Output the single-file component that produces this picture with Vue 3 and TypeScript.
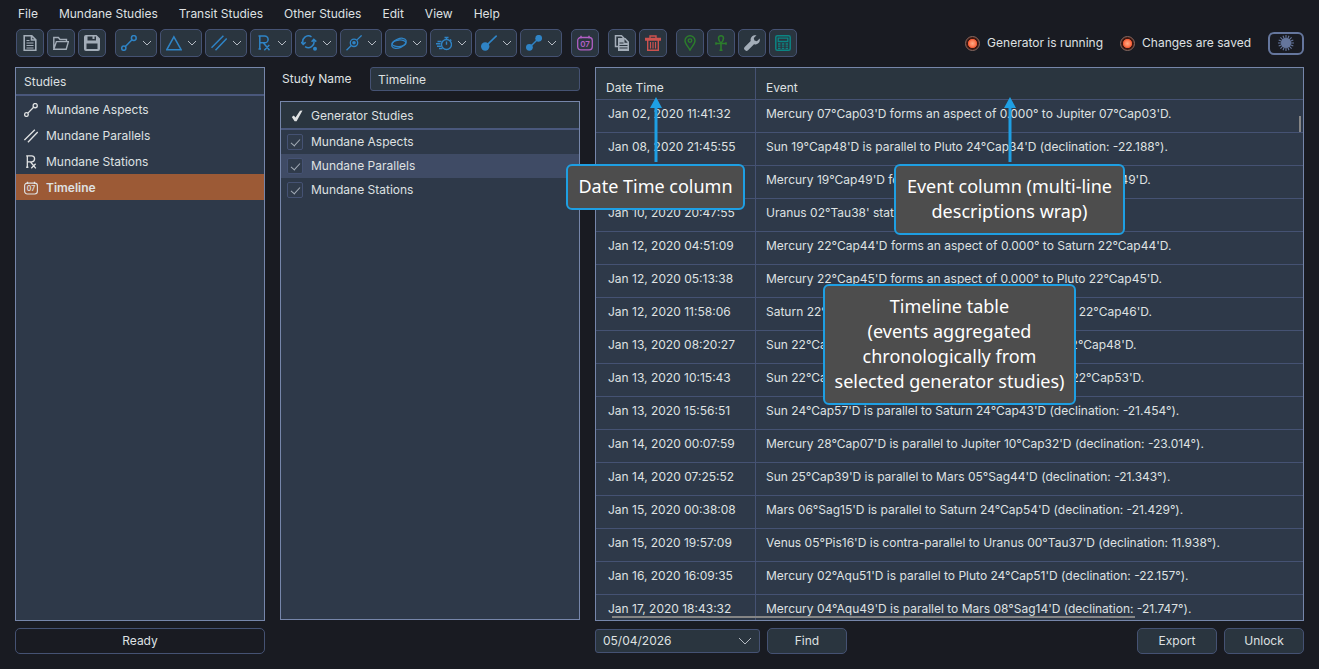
<script setup lang="ts">
import { ref } from 'vue'

interface Tool { name: string; icon: string; color: string; menu?: boolean }
interface EventRow { time: string; text: string }

const menus = ['File', 'Mundane Studies', 'Transit Studies', 'Other Studies', 'Edit', 'View', 'Help']

const stroke = 'fill="none" stroke="currentColor"'
const icons: Record<string, string> = {
  file: `<path ${stroke} stroke-width="1.6" d="M2.2.8h7.6l4 4v10.4H2.2zM9.5 1v4h4"/><path ${stroke} d="M4.5 5.5h3M4.5 8h7M4.5 10.5h7M4.5 13h7"/>`,
  open: `<path ${stroke} stroke-width="1.4" d="M.8 13.5V2.5h4.6l1.6 2h6.5v2M.8 14.2 3.4 6.6h12l-2.2 7.6z"/>`,
  save: `<path fill="currentColor" fill-rule="evenodd" d="M2 0h10.5L16 3.5V14a2 2 0 0 1-2 2H2a2 2 0 0 1-2-2V2a2 2 0 0 1 2-2zM3.5 1.5v4H12v-4h-1.500v2.500h-2v-2.500zM2.500 8.500v5.500h11v-5.500z"/>`,
  aspect: `<g ${stroke} stroke-width="1.5"><circle cx="2.800" cy="13.200" r="2.100"/><circle cx="12.800" cy="3" r="2.400"/><path d="m4.400 11.600 6.600-6.800"/></g>`,
  triangle: `<path ${stroke} stroke-width="1.500" d="M7.900 1.800 15.200 14.800H.7z"/>`,
  parallel: `<path ${stroke} stroke-width="1.500" d="M.5 12.700 12.400.8M4.500 15.200 15.700 3.500"/>`,
  rx: `<path ${stroke} stroke-width="1.500" d="M2.500 14H5M3.800 14V1M2.500 1h6.200a3.400 3.400 0 0 1 0 6.800H4M7.500 8l6 7.200M8.300 15.200l5-5.200"/>`,
  cycle: `<g ${stroke} stroke-width="1.500"><path d="M2.200 8.500A5.600 5.600 0 0 1 10.500 1.800M12.800 5.600a5.600 5.600 0 0 1-8.700 6"/><path d="M0 7l2.200 2.400L4.700 7.300M10.600 6.800l2.200-2.400 2.500 2.200"/></g><circle fill="currentColor" cx="14" cy="13.800" r="2"/>`,
  station: `<g ${stroke} stroke-width="1.300"><circle cx="8" cy="7.800" r="3.700"/><path d="M.5 15.300 5.300 10.500M10.700 5.100 15.600.4"/></g><circle fill="currentColor" cx="8" cy="7.800" r="1.800"/>`,
  orbit: `<g ${stroke} stroke-width="1.300"><ellipse cx="8" cy="8.300" rx="7.600" ry="4.400" transform="rotate(-24 8 8.300)"/><ellipse cx="8" cy="8.300" rx="7" ry="3.300" transform="rotate(-4 8 8.300)"/></g>`,
  speed: `<g ${stroke} stroke-width="1.400"><circle cx="10.500" cy="9.500" r="5"/><path d="M10.500 6.500v3.200M8.500 2.500h4M10.500 2.500v2M14 4.500l1.300 1.300M1.500 6.500h4M0 8.800h4.500M1 11.200h4M3 13.500h3.500"/></g>`,
  comet: `<circle fill="currentColor" cx="4.200" cy="11.500" r="4.200"/><path ${stroke} stroke-width="1.600" d="M5 10.800 15.700.7"/>`,
  link: `<g fill="currentColor"><circle cx="3.400" cy="12.300" r="3.400"/><circle cx="12.700" cy="3.300" r="3.400"/></g><path ${stroke} stroke-width="1.500" d="m3 13 10-10"/>`,
  calendar: `<rect ${stroke} stroke-width="1.300" x=".7" y="2.500" width="14.600" height="12.300" rx="3"/><path ${stroke} stroke-width="1.500" d="M4 .8v2.500M12 .8v2.500"/><text x="8" y="11.800" text-anchor="middle" font-family="Inter, sans-serif" font-size="8" font-weight="600" fill="currentColor">07</text>`,
  copy: `<path ${stroke} stroke-width="1.500" d="M4 11.500H1.500V.8h6l3 3"/><path fill="currentColor" fill-rule="evenodd" d="M4 3h7.500L15 6.800V16H4zm1.500 4.500v1h4v-1zm0 2.500v1h8v-1zm0 2.500v1h8v-1zM10.500 4.300V7.700H13.700z"/>`,
  trash: `<path ${stroke} stroke-width="1.400" d="M.7 5V3.500h14.600V5zM5 3V1h6v2M2.700 5.500v9.700h10.600V5.500"/><path ${stroke} stroke-width="1.200" d="M5.500 7v6.500M8 7v6.500M10.500 7v6.500"/>`,
  pin: `<path ${stroke} stroke-width="1.400" d="M8 15.200C6.500 12 3 9 3 5.800a5 5 0 0 1 10 0C13 9 9.500 12 8 15.200z"/><circle ${stroke} stroke-width="1.300" cx="8" cy="5.600" r="1.800"/>`,
  ankh: `<path ${stroke} stroke-width="1.600" d="M8 16V8C5 5.500 4.500.8 8 .8S11 5.500 8 8M3 8.500h10M6.500 15.300h3M3 7.300v2.400M13 7.300v2.400"/>`,
  wrench: `<path fill="currentColor" d="M15.700 3.500 12.900 6.200 10.400 5.600 9.800 3.100 12.500.3A4.700 4.700 0 0 0 6.700 6L.7 12a2 2 0 0 0 0 2.800l.5.500a2 2 0 0 0 2.800 0l6-6a4.700 4.700 0 0 0 5.700-5.800z"/>`,
  calculator: `<rect ${stroke} stroke-width="1.500" x=".8" y=".8" width="14.400" height="14.400" rx="1.500"/><path ${stroke} stroke-width="1.300" d="M3.200 3.200h9.600v3.300H3.200zM3 9h2.500M6.800 9h2.500M10.600 9h2.500M3 11.200h2.500M6.800 11.200h2.500M10.600 11.200h2.500M3 13.300h2.500M6.800 13.300h2.500M10.600 13.300h2.500"/>`,
  sun: `<circle fill="currentColor" cx="8" cy="8" r="5"/><path ${stroke} stroke-width="1.100" d="M8 0v16M0 8h16M2.400 2.400l11.200 11.200M13.600 2.400 2.400 13.600M5 .7l6 14.600M11 .7 5 15.300M.7 5l14.600 6M.7 11l14.600-6"/>`,
}

const grey = '#a3adb8'
const blue = '#2f84c6'
const toolGroups: Tool[][] = [
  [
    { name: 'New file', icon: 'file', color: grey },
    { name: 'Open file', icon: 'open', color: grey },
    { name: 'Save file', icon: 'save', color: grey },
  ],
  [
    { name: 'Aspects', icon: 'aspect', color: blue, menu: true },
    { name: 'Patterns', icon: 'triangle', color: blue, menu: true },
    { name: 'Parallels', icon: 'parallel', color: blue, menu: true },
    { name: 'Stations', icon: 'rx', color: blue, menu: true },
    { name: 'Cycles', icon: 'cycle', color: blue, menu: true },
    { name: 'Crossings', icon: 'station', color: blue, menu: true },
    { name: 'Orbits', icon: 'orbit', color: blue, menu: true },
    { name: 'Speeds', icon: 'speed', color: blue, menu: true },
    { name: 'Ingresses', icon: 'comet', color: blue, menu: true },
    { name: 'Midpoints', icon: 'link', color: blue, menu: true },
  ],
  [{ name: 'Timeline', icon: 'calendar', color: '#b15fc4' }],
  [
    { name: 'Duplicate', icon: 'copy', color: grey },
    { name: 'Delete', icon: 'trash', color: '#cc524f' },
  ],
  [
    { name: 'Locations', icon: 'pin', color: '#2c7d2c' },
    { name: 'Charts', icon: 'ankh', color: '#2c7d2c' },
    { name: 'Settings', icon: 'wrench', color: grey },
    { name: 'Calculator', icon: 'calculator', color: '#0b8583' },
  ],
]

const studies = [
  { name: 'Mundane Aspects', icon: 'aspect' },
  { name: 'Mundane Parallels', icon: 'parallel' },
  { name: 'Mundane Stations', icon: 'rx' },
  { name: 'Timeline', icon: 'calendar' },
]
const selected = ref('Timeline')
const studyName = ref('Timeline')
const date = ref('05/04/2026')

const generators = ref([
  { name: 'Mundane Aspects', on: true },
  { name: 'Mundane Parallels', on: true },
  { name: 'Mundane Stations', on: true },
])
const current = ref('Mundane Parallels')

const rows: EventRow[] = [
  { time: 'Jan 02, 2020 11:41:32', text: "Mercury 07°Cap03'D forms an aspect of 0.000° to Jupiter 07°Cap03'D." },
  { time: 'Jan 08, 2020 21:45:55', text: "Sun 19°Cap48'D is parallel to Pluto 24°Cap34'D (declination: -22.188°)." },
  { time: 'Jan 10, 2020 10:19:33', text: "Mercury 19°Cap49'D forms an aspect of 0.000° to Sun 19°Cap49'D." },
  { time: 'Jan 10, 2020 20:47:55', text: "Uranus 02°Tau38' stations direct." },
  { time: 'Jan 12, 2020 04:51:09', text: "Mercury 22°Cap44'D forms an aspect of 0.000° to Saturn 22°Cap44'D." },
  { time: 'Jan 12, 2020 05:13:38', text: "Mercury 22°Cap45'D forms an aspect of 0.000° to Pluto 22°Cap45'D." },
  { time: 'Jan 12, 2020 11:58:06', text: "Saturn 22°Cap46'D forms an aspect of 0.000° to Pluto 22°Cap46'D." },
  { time: 'Jan 13, 2020 08:20:27', text: "Sun 22°Cap48'D forms an aspect of 0.000° to Pluto 22°Cap48'D." },
  { time: 'Jan 13, 2020 10:15:43', text: "Sun 22°Cap53'D forms an aspect of 0.000° to Saturn 22°Cap53'D." },
  { time: 'Jan 13, 2020 15:56:51', text: "Sun 24°Cap57'D is parallel to Saturn 24°Cap43'D (declination: -21.454°)." },
  { time: 'Jan 14, 2020 00:07:59', text: "Mercury 28°Cap07'D is parallel to Jupiter 10°Cap32'D (declination: -23.014°)." },
  { time: 'Jan 14, 2020 07:25:52', text: "Sun 25°Cap39'D is parallel to Mars 05°Sag44'D (declination: -21.343°)." },
  { time: 'Jan 15, 2020 00:38:08', text: "Mars 06°Sag15'D is parallel to Saturn 24°Cap54'D (declination: -21.429°)." },
  { time: 'Jan 15, 2020 19:57:09', text: "Venus 05°Pis16'D is contra-parallel to Uranus 00°Tau37'D (declination: 11.938°)." },
  { time: 'Jan 16, 2020 16:09:35', text: "Mercury 02°Aqu51'D is parallel to Pluto 24°Cap51'D (declination: -22.157°)." },
  { time: 'Jan 17, 2020 18:43:32', text: "Mercury 04°Aqu49'D is parallel to Mars 08°Sag14'D (declination: -21.747°)." },
]
</script>

<template>
  <div class="app">
    <nav class="menubar" aria-label="Main menu">
      <button v-for="m in menus" :key="m" type="button">{{ m }}</button>
    </nav>

    <header class="toolbar">
      <div v-for="(group, i) in toolGroups" :key="i" class="group">
        <button v-for="t in group" :key="t.name" type="button" class="tool" :class="{ wide: t.menu }" :aria-label="t.name">
          <svg class="icon" viewBox="0 0 16 16" :style="{ color: t.color }" v-html="icons[t.icon]"></svg>
          <svg v-if="t.menu" class="chevron" viewBox="0 0 10 6"><path d="M1 1l4 4 4-4" /></svg>
        </button>
      </div>
      <div class="status">
        <span class="state"><i class="led"></i>Generator is running</span>
        <span class="state"><i class="led"></i>Changes are saved</span>
        <button type="button" class="theme" aria-label="Toggle theme">
          <svg class="icon" viewBox="0 0 16 16" v-html="icons.sun"></svg>
        </button>
      </div>
    </header>

    <main class="content">
      <section class="panel studies">
        <h2>Studies</h2>
        <button
          v-for="s in studies" :key="s.name" type="button" class="study"
          :class="{ active: s.name === selected }" @click="selected = s.name"
        >
          <svg viewBox="0 0 16 16" v-html="icons[s.icon]"></svg>{{ s.name }}
        </button>
      </section>

      <section class="editor">
        <div class="field">
          <label for="study-name">Study Name</label>
          <input id="study-name" v-model="studyName" type="text" />
        </div>
        <div class="panel generators">
          <h2>
            <svg viewBox="0 0 12 12"><path d="M.8 7 2.800 5.600 4.500 7.400 9 .8 11.500.5 5.600 11.200 3.600 11.200z" /></svg>
            Generator Studies
          </h2>
          <label v-for="g in generators" :key="g.name" class="generator" :class="{ current: g.name === current }">
            <input v-model="g.on" type="checkbox" />{{ g.name }}
          </label>
        </div>
      </section>

      <section class="timeline">
        <div class="panel viewport">
          <table>
            <thead>
              <tr><th class="time">Date Time</th><th>Event</th></tr>
            </thead>
            <tbody>
              <tr v-for="r in rows" :key="r.time"><td class="time">{{ r.time }}</td><td>{{ r.text }}</td></tr>
            </tbody>
          </table>
          <span class="thumb-v"></span>
          <span class="thumb-h"></span>
        </div>
        <div class="note note-date">Date Time column
          <svg class="arrow" viewBox="0 0 12 69"><path d="M6 0l6 11H0z" /><path d="M4.500 10h3v55h-3z" /></svg>
        </div>
        <div class="note note-event">Event column (multi-line<br />descriptions wrap)
          <svg class="arrow" viewBox="0 0 12 69"><path d="M6 0l6 11H0z" /><path d="M4.500 10h3v55h-3z" /></svg>
        </div>
        <div class="note note-table">Timeline table<br />(events aggregated<br />chronologically from<br />selected generator studies)</div>
      </section>
    </main>

    <footer class="bottom">
      <div class="ready" role="status">Ready</div>
      <div class="actions">
        <div class="picker">
          <select v-model="date" aria-label="Date"><option>05/04/2026</option></select>
          <svg viewBox="0 0 14 8"><path d="M1 1l6 6 6-6" /></svg>
        </div>
        <button type="button" class="action">Find</button>
        <span class="spacer"></span>
        <button type="button" class="action">Export</button>
        <button type="button" class="action">Unlock</button>
      </div>
    </footer>
  </div>
</template>

<style>
body {
  background: #191b22;
}
</style>

<style scoped>
* {
  box-sizing: border-box;
}
.app {
  display: flex;
  flex-direction: column;
  height: 100vh;
  padding: 0 15px 15px;
  background: #191b22;
  color: #dfe1e2;
  font: 12px/18px Inter, sans-serif;
}
button, input, select {
  font: inherit;
  color: inherit;
}
svg {
  display: block;
  flex: none;
}
.menubar {
  display: flex;
  gap: 1px;
  height: 29px;
  padding-bottom: 2px;
  margin-left: -7px;
}
.menubar button {
  padding: 0 10px;
  border: 0;
  background: none;
}
.toolbar {
  display: flex;
  align-items: center;
  gap: 9px;
  height: 28px;
  padding-left: 1px;
}
.group {
  display: flex;
  gap: 3px;
}
.tool {
  display: flex;
  align-items: center;
  justify-content: center;
  gap: 5px;
  width: 28px;
  height: 28px;
  padding: 0;
  border: 1px solid #455273;
  border-radius: 5px;
  background: #2a353f;
}
.tool.wide {
  width: 42px;
}
.icon {
  width: 16px;
  height: 16px;
}
.chevron {
  width: 10px;
  height: 6px;
}
.chevron path, .picker path {
  fill: none;
  stroke: #b4bac2;
  stroke-width: 1;
}
.status {
  display: flex;
  align-items: center;
  gap: 17px;
  margin-left: auto;
}
.state {
  display: flex;
  align-items: center;
  gap: 7px;
}
.led {
  width: 15px;
  height: 15px;
  border: 1px solid #866860;
  border-radius: 50%;
  background: radial-gradient(circle closest-side, #ffa984 0, #ff7c54 45%, #ee5832 66%, #3a1611 76%, #4a1e15 100%);
}
.theme {
  display: flex;
  align-items: center;
  justify-content: center;
  width: 36px;
  height: 23px;
  padding: 0;
  border: 2px solid #65769d;
  border-radius: 6px;
  background: none;
  color: #65769d;
}
.content {
  display: flex;
  flex: 1;
  gap: 15px;
  min-height: 0;
  padding-top: 10px;
}
.panel {
  border: 1px solid #7686aa;
  background: #2e3949;
}
.panel h2 {
  display: flex;
  align-items: center;
  gap: 8px;
  height: 28px;
  margin: 0;
  padding: 2px 8px 0;
  border-bottom: 2px solid #4a587c;
  background: #2a353f;
  font-size: 12px;
  font-weight: 400;
}
.studies {
  width: 250px;
}
.study {
  display: flex;
  align-items: center;
  gap: 8px;
  width: 100%;
  height: 26px;
  padding: 2px 8px 0;
  border: 0;
  background: none;
}
.study svg {
  width: 14px;
  height: 14px;
}
.study.active {
  background: #9c5a36;
  font-weight: 600;
}
.editor {
  display: flex;
  flex-direction: column;
  gap: 10px;
  width: 300px;
}
.field {
  display: flex;
  align-items: center;
  justify-content: space-between;
  padding-left: 2px;
}
.field input {
  width: 210px;
  height: 24px;
  padding: 0 7px;
  border: 1px solid #455273;
  border-radius: 3px;
  background: #2a353f;
}
.generators {
  flex: 1;
  margin-bottom: 1px;
}
.generators h2 {
  padding: 2px 10px 0;
}
.generators h2 svg {
  width: 12px;
  height: 12px;
  fill: #dfe1e2;
}
.generator {
  display: flex;
  align-items: center;
  gap: 8px;
  height: 24px;
  padding: 0 6px;
}
.generator.current {
  background: #3f4b65;
}
.generator input {
  display: flex;
  align-items: center;
  justify-content: center;
  width: 16px;
  height: 16px;
  margin: 0;
  border: 1px solid #455273;
  border-radius: 2px;
  background: #303b4b;
  appearance: none;
}
.generator input:checked::before {
  content: '';
  width: 4px;
  height: 8px;
  margin-bottom: 2px;
  border: solid #a4acb7;
  border-width: 0 1px 1px 0;
  transform: rotate(42deg);
}
.timeline {
  position: relative;
  flex: 1;
  min-width: 0;
}
.viewport {
  position: relative;
  height: 100%;
  overflow: hidden;
}
table {
  width: 100%;
  border-collapse: separate;
  border-spacing: 0;
  table-layout: fixed;
}
th, td {
  height: 33px;
  padding: 0 10px 4px;
  border-bottom: 1px solid #455273;
  font-weight: 400;
  text-align: left;
  white-space: nowrap;
}
th {
  height: 32px;
  padding: 8px 10px 0;
  background: #2a353f;
}
.time {
  width: 160px;
  border-right: 1px solid #455273;
}
td.time {
  padding-left: 12px;
}
.thumb-v, .thumb-h {
  position: absolute;
  background: #858585;
}
.thumb-v {
  top: 48px;
  right: 2px;
  width: 2px;
  height: 16px;
}
.thumb-h {
  bottom: 2px;
  left: 16px;
  width: 74%;
  height: 2px;
}
.note {
  position: absolute;
  padding: 8px 0 9px;
  border: 2px solid #1e9fe3;
  border-radius: 6px;
  background: #4d4d4d;
  color: #fff;
  font: 18px/25px "Noto Sans", sans-serif;
  text-align: center;
  white-space: nowrap;
}
.note-date {
  top: 97px;
  left: -29px;
  width: 179px;
}
.note-event {
  top: 97px;
  left: 299px;
  width: 231px;
}
.note-table {
  top: 217px;
  left: 228px;
  width: 253px;
}
.arrow {
  position: absolute;
  bottom: 100%;
  left: 50%;
  width: 12px;
  height: 69px;
  margin-left: -6px;
  fill: #1e9fe3;
}
.bottom {
  display: flex;
  gap: 330px;
  padding-top: 7px;
}
.ready, .action {
  display: flex;
  align-items: center;
  justify-content: center;
  height: 26px;
  border: 1px solid #455273;
  border-radius: 5px;
}
.ready {
  width: 250px;
}
.actions {
  display: flex;
  flex: 1;
  align-items: center;
  gap: 7px;
}
.action {
  width: 80px;
  padding: 0;
  background: #2a353f;
}
.spacer {
  flex: 1;
}
.picker {
  position: relative;
}
.picker select {
  display: block;
  width: 165px;
  height: 24px;
  padding: 0 7px;
  border: 1px solid #455273;
  border-radius: 3px;
  background: #2a353f;
  appearance: none;
}
.picker svg {
  position: absolute;
  top: 8px;
  right: 8px;
  width: 14px;
  height: 8px;
  pointer-events: none;
}
</style>
